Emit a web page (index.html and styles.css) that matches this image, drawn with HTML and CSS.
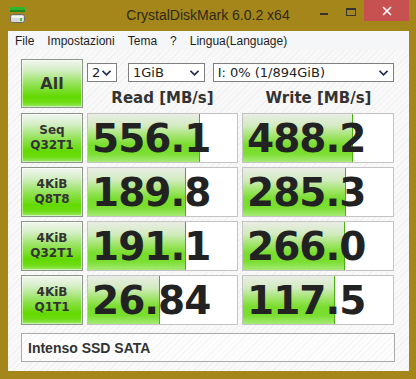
FILE: index.html
```html
<!DOCTYPE html>
<html>
  <head>
    <title>CrystalDiskMark 6.0.2 x64</title>
    <link rel="stylesheet" href="styles.css">
  </head>
  <body>
    <div class="window">
      <div class="titlebar">
        <svg class="app-icon" width="16" height="18" viewBox="0 0 16 18">
          <rect x="0" y="1" width="15" height="3" fill="#2fb82f"/>
          <rect x="0" y="4" width="15" height="2" fill="#1e8a1e"/>
          <rect x="0.5" y="8.5" width="14" height="8" rx="2" fill="#d8d8d8" stroke="#6a6a6a"/>
          <rect x="2" y="10" width="11" height="2" fill="#f4f4f4"/>
          <rect x="10" y="12" width="2" height="3" fill="#3cc83c"/>
        </svg>
        <div class="title">CrystalDiskMark 6.0.2 x64</div>
        <div class="caption">
          <div class="cap-min"></div>
          <div class="cap-max"></div>
          <div class="cap-close">
            <svg width="10" height="10" viewBox="0 0 10 10">
              <path d="M1 1 L9 9 M9 1 L1 9" stroke="#fff" stroke-width="1.6"/>
            </svg>
          </div>
        </div>
      </div>

      <div class="client">
        <div class="menu">
          <span>File</span>
          <span>Impostazioni</span>
          <span>Tema</span>
          <span>?</span>
          <span>Lingua(Language)</span>
        </div>

        <div class="panel">
          <div class="grid">
            <div class="btn btn-all">All</div>
            <div class="top">
              <div class="selects">
                <div class="select sel-count">2<svg class="chev" width="9" height="6" viewBox="0 0 9 6"><path d="M0.5 0.8 L4.5 4.8 L8.5 0.8" fill="none" stroke="#1d2b4f" stroke-width="1.6"/></svg></div>
                <div class="select sel-size">1GiB<svg class="chev" width="9" height="6" viewBox="0 0 9 6"><path d="M0.5 0.8 L4.5 4.8 L8.5 0.8" fill="none" stroke="#1d2b4f" stroke-width="1.6"/></svg></div>
                <div class="select sel-drive">I: 0% (1/894GiB)<svg class="chev" width="9" height="6" viewBox="0 0 9 6"><path d="M0.5 0.8 L4.5 4.8 L8.5 0.8" fill="none" stroke="#1d2b4f" stroke-width="1.6"/></svg></div>
              </div>
              <div class="heads">
                <div class="head">Read [MB/s]</div>
                <div class="head">Write [MB/s]</div>
              </div>
            </div>

            <div class="btn">Seq<br>Q32T1</div>
            <div class="result"><div class="fill" style="width: 111px;"></div><span>556.1</span></div>
            <div class="result"><div class="fill" style="width: 109px;"></div><span>488.2</span></div>

            <div class="btn">4KiB<br>Q8T8</div>
            <div class="result"><div class="fill" style="width: 97px;"></div><span>189.8</span></div>
            <div class="result"><div class="fill" style="width: 102px;"></div><span>285.3</span></div>

            <div class="btn">4KiB<br>Q32T1</div>
            <div class="result"><div class="fill" style="width: 97px;"></div><span>191.1</span></div>
            <div class="result"><div class="fill" style="width: 101px;"></div><span>266.0</span></div>

            <div class="btn">4KiB<br>Q1T1</div>
            <div class="result"><div class="fill" style="width: 71px;"></div><span>26.84</span></div>
            <div class="result"><div class="fill" style="width: 91px;"></div><span>117.5</span></div>
          </div>

          <div class="name">Intenso SSD SATA</div>
        </div>
      </div>
    </div>
  </body>
</html>
```

FILE: styles.css
```css
body {
  margin: 0;
  padding: 0;
  font-family: "Liberation Sans", Arial, sans-serif;
  color: #333;
}
.window {
  width: 416px;
  height: 379px;
  background: #a4861a;
  display: flex;
  flex-direction: column;
  box-sizing: border-box;
  padding: 0 7px 8px 8px;
}
.titlebar {
  height: 31px;
  display: flex;
  align-items: flex-start;
  position: relative;
}
.app-icon {
  margin: 6px 0 0 2px;
}
.title {
  position: absolute;
  left: -8px;
  right: -7px;
  top: 7px;
  text-align: center;
  font-size: 14px;
  color: #2e2a1c;
}
.caption {
  margin-left: auto;
  display: flex;
  align-items: flex-start;
}
.cap-min {
  width: 8px;
  height: 2px;
  background: #333;
  margin: 13px 18px 0 0;
}
.cap-max {
  width: 8px;
  height: 5px;
  border: 1px solid #333;
  border-top-width: 2px;
  margin: 8px 8px 0 0;
}
.cap-close {
  width: 45px;
  height: 21px;
  background: #c75050;
  display: flex;
  align-items: center;
  justify-content: center;
}
.client {
  flex: 1;
  display: flex;
  flex-direction: column;
  background: repeating-linear-gradient(135deg, #f9f9f9 0 3px, #f1f1f1 3px 4px);
}
.menu {
  height: 19px;
  background: #f5f6f7;
  display: flex;
  align-items: center;
  gap: 13px;
  padding-left: 7px;
  font-size: 12px;
  color: #1e1e1e;
}
.panel {
  padding: 9px 14px 0 13px;
}
.grid {
  display: grid;
  grid-template-columns: 62px 151px 152px;
  grid-template-rows: repeat(5, 50px);
  column-gap: 4px;
  row-gap: 4px;
}
.btn {
  box-sizing: border-box;
  border: 1px solid #8c958a;
  box-shadow: inset 0 0 0 1px rgba(255, 255, 255, 0.5);
  background: linear-gradient(to bottom, #f3f5f1 0%, #d4eec4 22%, #94e35a 50%, #62d900 78%, #6fdc14 90%, #9be86a 100%);
  display: flex;
  align-items: center;
  justify-content: center;
  text-align: center;
  font-family: "DejaVu Sans", Verdana, sans-serif;
  font-weight: bold;
  font-size: 12px;
  line-height: 15px;
  color: #333;
}
.btn-all {
  font-size: 16px;
  height: 49px;
}
.top {
  grid-column: 2 / 4;
  display: flex;
  flex-direction: column;
}
.selects {
  margin-top: 4px;
  display: flex;
  height: 19px;
}
.select {
  box-sizing: border-box;
  height: 19px;
  border: 1px solid #7f7f7f;
  background: #fff;
  font-family: "DejaVu Sans", Tahoma, sans-serif;
  font-size: 13px;
  line-height: 17px;
  color: #222;
  padding-left: 4px;
  display: flex;
  align-items: center;
  justify-content: space-between;
  padding-right: 5px;
}
.sel-count {
  width: 30px;
  margin-right: 11px;
}
.sel-size {
  width: 77px;
  margin-right: 8px;
}
.sel-drive {
  width: 182px;
}
.heads {
  display: flex;
  column-gap: 5px;
  margin-top: 7px;
}
.head {
  width: 151px;
  text-align: center;
  font-family: "DejaVu Sans", Verdana, sans-serif;
  font-weight: bold;
  font-size: 15px;
  line-height: 18px;
  color: #333;
}
.result {
  position: relative;
  box-sizing: border-box;
  border: 1px solid #c4c4c4;
  background: #fff;
  display: flex;
  align-items: center;
  padding-left: 4px;
  font-family: "DejaVu Sans", Verdana, sans-serif;
  font-weight: bold;
  font-size: 39px;
  letter-spacing: -1px;
  color: #222;
  overflow: hidden;
}
.result span {
  position: relative;
}
.fill {
  position: absolute;
  left: 0;
  top: 0;
  bottom: 0;
  border-right: 1px solid #48b010;
  background: linear-gradient(to bottom, #eaede6 0%, #d2ebc0 25%, #9de464 48%, #78dd2c 65%, #7ade30 82%, #a6ea76 100%);
}
.name {
  margin-top: 8px;
  height: 29px;
  box-sizing: border-box;
  border: 1px solid #a9a9a9;
  background: repeating-linear-gradient(135deg, #fdfdfd 0 3px, #f6f6f6 3px 4px);
  display: flex;
  align-items: center;
  padding-left: 6px;
  font-weight: bold;
  font-size: 14px;
  color: #333;
}
```
